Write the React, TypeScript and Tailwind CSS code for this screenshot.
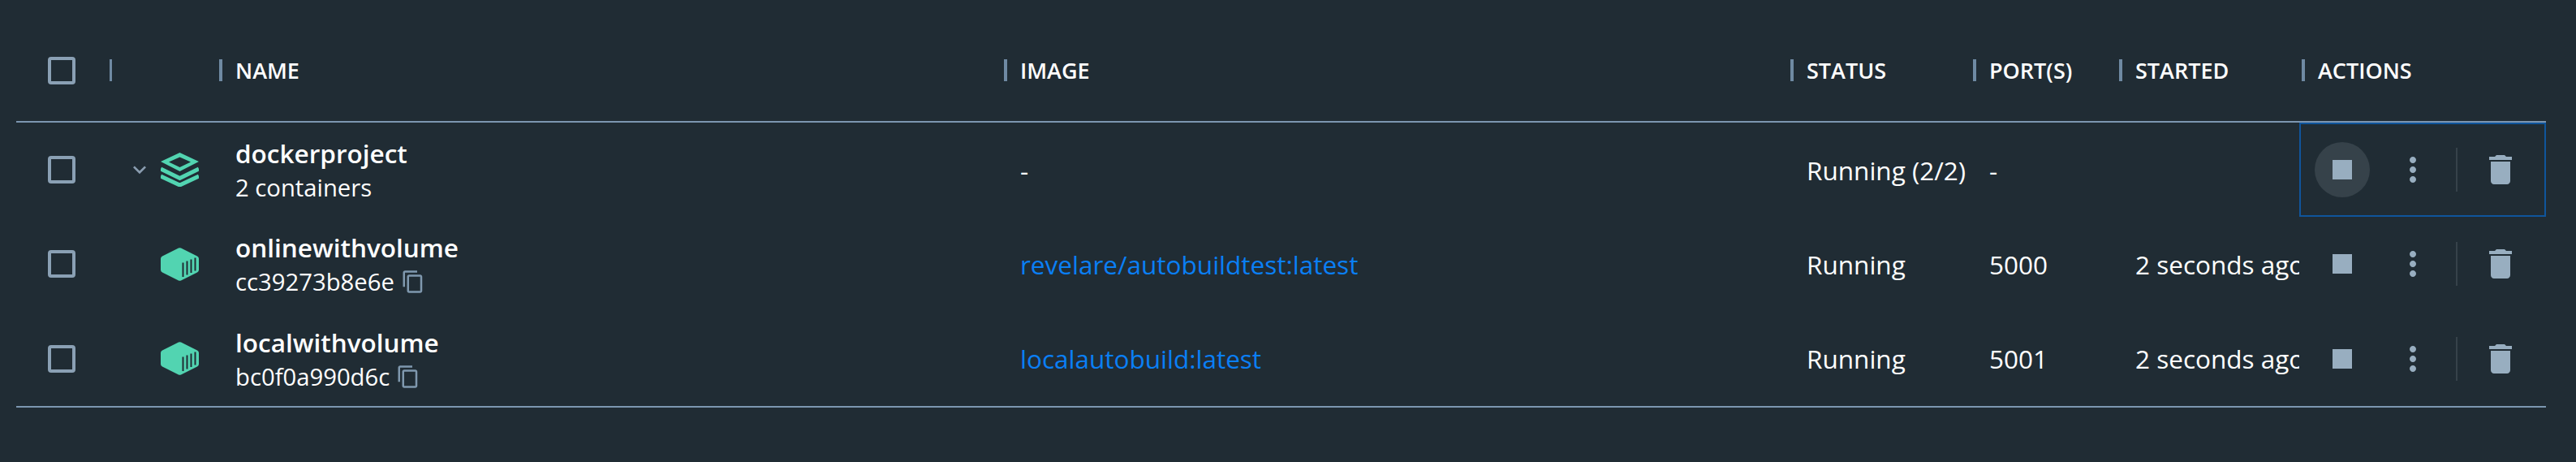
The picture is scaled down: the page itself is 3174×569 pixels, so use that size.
import { MdContentCopy, MdDelete, MdExpandMore, MdMoreVert, MdStop } from 'react-icons/md';

const GRID =
  'grid grid-cols-[115px_135px_967px_969px_225px_180px_222px_304px] items-center';

const HEADERS = ['NAME', 'IMAGE', 'STATUS', 'PORT(S)', 'STARTED', 'ACTIONS'];

type Row = {
  name: string;
  sub: string;
  image: string;
  status: string;
  ports: string;
  started: string;
  isProject?: boolean;
};

const ROWS: Row[] = [
  {
    name: 'dockerproject',
    sub: '2 containers',
    image: '-',
    status: 'Running (2/2)',
    ports: '-',
    started: '',
    isProject: true,
  },
  {
    name: 'onlinewithvolume',
    sub: 'cc39273b8e6e',
    image: 'revelare/autobuildtest:latest',
    status: 'Running',
    ports: '5000',
    started: '2 seconds ago',
  },
  {
    name: 'localwithvolume',
    sub: 'bc0f0a990d6c',
    image: 'localautobuild:latest',
    status: 'Running',
    ports: '5001',
    started: '2 seconds ago',
  },
];

const Checkbox = () => (
  <div className="ml-[39px] h-[34px] w-[34px] rounded-[4px] border-[4px] border-[#8aa0b4]" />
);

const StackIcon = () => (
  <svg width="47" height="42" viewBox="0 0 47 42" fill="none">
    <path d="M23.5 0 47 11 23.5 23 0 11Z M23.5 5.5 10 11.5 23.5 18 37 11.5Z" fill="#52d4b1" fillRule="evenodd" />
    <path d="M0 20 23.5 31.5 47 20" stroke="#52d4b1" strokeWidth="5" />
    <path d="M0 29 23.5 40 47 29" stroke="#52d4b1" strokeWidth="5" />
  </svg>
);

const ContainerIcon = () => (
  <svg width="47" height="41" viewBox="0 0 47 41" fill="none">
    <path
      d="M22 .6a3.5 3.5 0 0 1 3 0L45 10.400a3.500 3.500 0 0 1 2 3.100V27.500a3.500 3.500 0 0 1-2 3.100L25 40.400a3.500 3.500 0 0 1-3 0L2 30.600a3.500 3.500 0 0 1-2-3.100V13.500a3.500 3.500 0 0 1 2-3.100Z"
      fill="#52d4b1"
    />
    <path
      d="M27.500 18.500V36 M32.500 16.500V33.500 M37.500 14.500V31 M42.500 12.500V28.500"
      stroke="#202c34"
      strokeWidth="2"
    />
  </svg>
);

function App() {
  return (
    <div
      className="min-h-[569px] w-[3174px] overflow-hidden bg-[#202c34] pl-[20px] text-white"
      style={{ fontFamily: '"Open Sans", "Noto Sans", sans-serif' }}>
      <div className="w-[3117px]">
        <div className={`${GRID} h-[151px] border-b-2 border-[#7c96b0] pt-[24px]`}>
          <Checkbox />
          <div className="h-[27px] w-[3px] bg-[#6f8aa3]" />
          {HEADERS.map((label) => (
            <div key={label} className={`flex items-center ${label === 'ACTIONS' ? 'pl-[3px]' : ''}`}>
              <span className="h-[27px] w-[4px] bg-[#6f8aa3]" />
              <span className="ml-[16px] text-[27px] font-semibold leading-[27px]">{label}</span>
            </div>
          ))}
        </div>

        {ROWS.map((row) => (
          <div key={row.name} className={`${GRID} h-[116.33px]`}>
            <Checkbox />
            <div className="flex items-center pl-[21px]">
              <span className="flex w-[32px] justify-center text-[#8a9db0]">
                {row.isProject && <MdExpandMore size={32} />}
              </span>
              <span className="ml-[10px] flex">
                {row.isProject ? <StackIcon /> : <ContainerIcon />}
              </span>
            </div>
            <div className="pl-[20px]">
              <div className="text-[31.5px] font-semibold leading-[44px]">{row.name}</div>
              <div className="flex items-center text-[29.25px] leading-[40px]">
                {row.sub}
                {!row.isProject && (
                  <MdContentCopy size={30} className="ml-[8px] text-[#7f98ae]" />
                )}
              </div>
            </div>
            <div
              className={`pl-[20px] text-[31.5px] ${row.isProject ? 'text-white' : 'text-[#0a7ff5]'}`}>
              {row.image}
            </div>
            <div className="pl-[20px] text-[31.5px]">{row.status}</div>
            <div className="pl-[20px] text-[31.5px]">{row.ports}</div>
            <div className="overflow-hidden whitespace-nowrap pl-[20px] text-[31.5px]">{row.started}</div>
            <div
              className={`flex h-full items-center gap-[19px] text-[#98aec0] ${
                row.isProject ? 'border-2 border-[#0f559c] pl-[17px]' : 'pl-[19px]'
              }`}>
              <span
                className={`flex h-[68px] w-[68px] items-center justify-center rounded-full ${
                  row.isProject ? 'bg-[#36424a]' : ''
                }`}>
                <MdStop size={48} />
              </span>
              <span className="flex h-[68px] w-[68px] items-center justify-center">
                <MdMoreVert size={48} />
              </span>
              <span className="h-[54px] w-[2px] bg-[#36424a]" />
              <span className="flex h-[68px] w-[68px] items-center justify-center">
                <MdDelete size={48} />
              </span>
            </div>
          </div>
        ))}
        <div className="h-[2px] bg-[#7c96b0]" />
      </div>
    </div>
  );
}

export default App;
